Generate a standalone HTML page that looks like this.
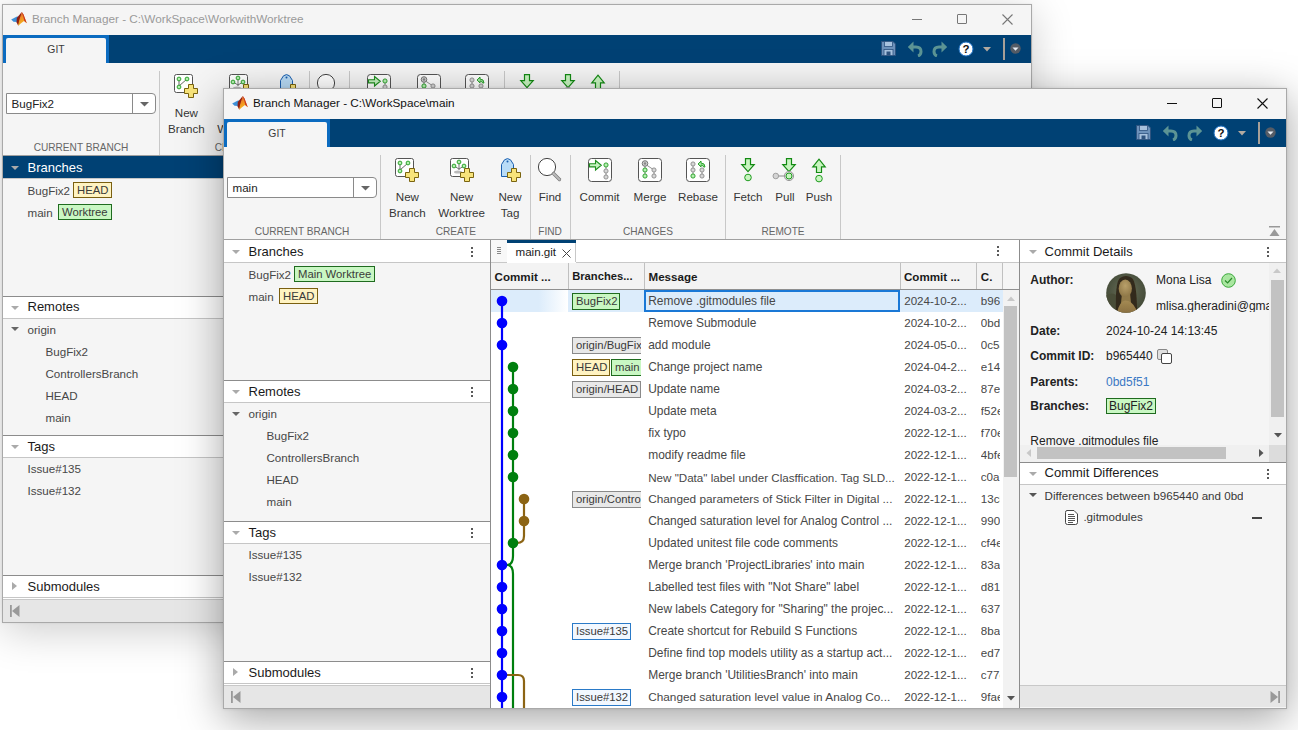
<!DOCTYPE html><html><head><meta charset="utf-8"><style>
html,body{margin:0;padding:0;width:1298px;height:730px;overflow:hidden;background:#fff;}
body{position:relative;font-family:"Liberation Sans",sans-serif;}
div,svg{position:absolute;white-space:nowrap;}
</style></head><body>
<div style="left:2px;top:4px;width:1030px;height:619px;background:#f5f5f5;border:1px solid #a9a9a9;box-sizing:border-box;box-shadow:0 8px 40px rgba(0,0,0,0.20), 0 0 2px rgba(0,0,0,0.08);"></div>
<svg style="left:7px;top:8px;" width="24" height="22" viewBox="0 0 24 22">
<defs><linearGradient id="mlo" x1="0" y1="0" x2="0.3" y2="1"><stop offset="0" stop-color="#c0392b"/><stop offset="0.45" stop-color="#f08a24"/><stop offset="1" stop-color="#f5b81c"/></linearGradient></defs>
<path d="M4.2 11.5 L8 9.5 L10.5 8.2 L11.8 10.5 L10 14 L6.5 13.8 Z" fill="#3d8fd6"/>
<path d="M9.8 10 L14.8 3.9 L13.5 11 L11.2 17.8 L9.6 14.2 Z" fill="#8e1f12"/>
<path d="M14.8 3.9 L16.5 6.5 L19.8 15.3 L17 13 L14 15.2 L11.2 17.8 L12 13 Z" fill="url(#mlo)"/>
<path d="M14.8 3.9 L16.5 6.5 L19.8 15.3 L17.3 13 L16 7.5 Z" fill="#c9331f"/>
</svg>
<div style="top:13.45px;font-size:11.75px;line-height:11.75px;color:#9a9a9a;left:32px;">Branch Manager - C:\WorkSpace\WorkwithWorktree</div>
<div style="left:912px;top:19px;width:10px;height:1px;background:#777;"></div>
<div style="left:957px;top:14px;width:8px;height:8px;border:1px solid #777;border-radius:1px;"></div>
<svg style="left:1002px;top:14px;" width="11" height="11" viewBox="0 0 11 11"><path d="M0.5 0.5 L10.5 10.5 M10.5 0.5 L0.5 10.5" stroke="#777" stroke-width="1.1"/></svg>
<div style="left:3px;top:35px;width:1028px;height:28px;background:#004174;"></div>
<div style="left:3px;top:35px;width:106px;height:28px;background:#0b6bc0;"></div>
<div style="left:6px;top:38px;width:100px;height:25px;background:#f5f5f5;border-radius:2px 2px 0 0;"></div>
<div style="top:45.20px;font-size:10.4px;line-height:10.4px;color:#3a3a3a;left:-244px;width:600px;text-align:center;">GIT</div>
<svg style="left:881px;top:41px;" width="15" height="15" viewBox="0 0 15 15">
<path d="M0.5 0.5 H12 L14.5 3 V14.5 H0.5 Z" fill="#6d92bb" stroke="#2f5480" stroke-width="1"/>
<rect x="3.5" y="0.5" width="8" height="5" fill="#a8c2de" stroke="#2f5480" stroke-width="0.8"/>
<rect x="3" y="8.5" width="9" height="6" fill="#a8c2de" stroke="#2f5480" stroke-width="0.8"/>
<rect x="5.5" y="10.5" width="4" height="4" fill="#2f5480"/>
</svg>
<svg style="left:907px;top:40px;" width="16" height="17" viewBox="0 0 16 17">
<path d="M0.8 7 L6.5 1.5 V12.5 Z" fill="#5c9494"/>
<path d="M6 7 H9 Q14 7 14 11.5 Q14 15 11 16" stroke="#5c9494" stroke-width="3" fill="none"/>
</svg>
<svg style="left:932px;top:40px;" width="16" height="17" viewBox="0 0 16 17">
<path d="M15.2 7 L9.5 1.5 V12.5 Z" fill="#5c9494"/>
<path d="M10 7 H7 Q2 7 2 11.5 Q2 15 5 16" stroke="#5c9494" stroke-width="3" fill="none"/>
</svg>
<svg style="left:958px;top:41px;" width="16" height="16" viewBox="0 0 16 16">
<circle cx="8" cy="8" r="7" fill="#fff" stroke="#1a6fc4" stroke-width="1"/>
<text x="8" y="12.3" text-anchor="middle" font-family="Liberation Sans" font-weight="700" font-size="11.5" fill="#111">?</text>
</svg>
<svg style="left:983px;top:47px;" width="8" height="5" viewBox="0 0 8 5"><path d="M0 0 L8 0 L4 4.5 Z" fill="#b3aaa0"/></svg>
<div style="left:1003px;top:38px;width:2px;height:22px;background:#a8a098;"></div>
<svg style="left:1010px;top:43px;" width="11" height="11" viewBox="0 0 11 11"><circle cx="5.5" cy="5.5" r="5.2" fill="#555c66"/><path d="M2.5 4.5 L8.5 4.5 L5.5 7.8 Z" fill="#e8eef5"/></svg>
<div style="left:6px;top:93px;width:150px;height:21px;background:#fff;border:1px solid #8a8a8a;border-radius:0 4px 4px 0;box-sizing:border-box;"></div>
<div style="left:132px;top:93px;width:1px;height:21px;background:#8a8a8a;"></div>
<svg style="left:140px;top:102px;" width="9" height="5.5" viewBox="0 0 9 5.5"><path d="M0 0 H9 L4.5 4.5 Z" fill="#666"/></svg>
<div style="top:97.78px;font-size:11.6px;line-height:11.6px;color:#222;left:11.5px;">BugFix2</div>
<div style="left:159px;top:71px;width:1px;height:84px;background:#c8c8c8;"></div>
<div style="left:309px;top:71px;width:1px;height:84px;background:#c8c8c8;"></div>
<div style="left:349px;top:71px;width:1px;height:84px;background:#c8c8c8;"></div>
<div style="left:504px;top:71px;width:1px;height:84px;background:#c8c8c8;"></div>
<div style="left:619px;top:71px;width:1px;height:84px;background:#c8c8c8;"></div>
<div style="top:143.15px;font-size:10.1px;line-height:10.1px;color:#666;left:-219px;width:600px;text-align:center;">CURRENT BRANCH</div>
<div style="top:143.15px;font-size:10.1px;line-height:10.1px;color:#666;left:-65.19999999999999px;width:600px;text-align:center;">CREATE</div>
<div style="top:143.15px;font-size:10.1px;line-height:10.1px;color:#666;left:29px;width:600px;text-align:center;">FIND</div>
<div style="top:143.15px;font-size:10.1px;line-height:10.1px;color:#666;left:127px;width:600px;text-align:center;">CHANGES</div>
<div style="top:143.15px;font-size:10.1px;line-height:10.1px;color:#666;left:262px;width:600px;text-align:center;">REMOTE</div>
<svg style="left:174.4px;top:74px;" width="20" height="20" viewBox="0 0 20 20">
<rect x="0.5" y="0.5" width="18" height="18" rx="2" fill="#fff" stroke="#555" stroke-width="1"/>
<path d="M5 5 L5 13 M5 12 L13 5" stroke="#555" stroke-width="0.9"/>
<circle cx="5" cy="5" r="1.9" fill="#b5efb0" stroke="#1f9b1f" stroke-width="0.9"/>
<circle cx="13" cy="5" r="1.9" fill="#b5efb0" stroke="#1f9b1f" stroke-width="0.9"/>
<circle cx="5" cy="13" r="1.9" fill="#b5efb0" stroke="#1f9b1f" stroke-width="0.9"/>
</svg>
<svg style="left:184.4px;top:84px;" width="14" height="14" viewBox="0 0 14 14"><path d="M4.5 0.5 H9.5 V4.5 H13.5 V9.5 H9.5 V13.5 H4.5 V9.5 H0.5 V4.5 H4.5 Z" fill="#f7e37a" stroke="#7a6410" stroke-width="1"/></svg>
<div style="top:106.68px;font-size:11.6px;line-height:11.6px;color:#363636;left:-113.6px;width:600px;text-align:center;">New</div>
<div style="top:122.68px;font-size:11.6px;line-height:11.6px;color:#363636;left:-113.6px;width:600px;text-align:center;">Branch</div>
<svg style="left:228.6px;top:74px;" width="20" height="20" viewBox="0 0 20 20">
<rect x="0.5" y="0.5" width="18" height="18" rx="2" fill="#fff" stroke="#555" stroke-width="1"/>
<path d="M9 4 L9 12 M4 8 L9 11 L14 8" stroke="#666" stroke-width="0.9" fill="none"/>
<ellipse cx="8" cy="14" rx="4" ry="1.6" fill="#bbb"/>
<circle cx="9" cy="4" r="1.9" fill="#b5efb0" stroke="#1f9b1f" stroke-width="0.9"/>
<circle cx="4" cy="8" r="1.9" fill="#b5efb0" stroke="#1f9b1f" stroke-width="0.9"/>
<circle cx="14" cy="8" r="1.9" fill="#b5efb0" stroke="#1f9b1f" stroke-width="0.9"/>
</svg>
<svg style="left:238.6px;top:84px;" width="14" height="14" viewBox="0 0 14 14"><path d="M4.5 0.5 H9.5 V4.5 H13.5 V9.5 H9.5 V13.5 H4.5 V9.5 H0.5 V4.5 H4.5 Z" fill="#f7e37a" stroke="#7a6410" stroke-width="1"/></svg>
<div style="top:106.68px;font-size:11.6px;line-height:11.6px;color:#363636;left:-59.400000000000006px;width:600px;text-align:center;">New</div>
<div style="top:122.68px;font-size:11.6px;line-height:11.6px;color:#363636;left:-59.400000000000006px;width:600px;text-align:center;">Worktree</div>
<svg style="left:280px;top:74px;" width="14" height="19" viewBox="0 0 14 19">
<path d="M0.5 18.5 V6.5 L3.5 1.8 Q6.5 -0.6 9.5 1.8 L12.5 6.5 V18.5 Z" fill="#b9dcf7" stroke="#1a5fb0" stroke-width="1"/>
<circle cx="6.5" cy="3.5" r="1" fill="#1a5fb0"/>
</svg>
<svg style="left:286px;top:84px;" width="14" height="14" viewBox="0 0 14 14"><path d="M4.5 0.5 H9.5 V4.5 H13.5 V9.5 H9.5 V13.5 H4.5 V9.5 H0.5 V4.5 H4.5 Z" fill="#f7e37a" stroke="#7a6410" stroke-width="1"/></svg>
<div style="top:106.68px;font-size:11.6px;line-height:11.6px;color:#363636;left:-11px;width:600px;text-align:center;">New</div>
<div style="top:122.68px;font-size:11.6px;line-height:11.6px;color:#363636;left:-11px;width:600px;text-align:center;">Tag</div>
<svg style="left:316px;top:73px;" width="26" height="26" viewBox="0 0 26 26">
<circle cx="10" cy="10" r="8.6" fill="#fff" stroke="#444" stroke-width="1"/>
<path d="M16.5 16.5 L22.5 22.5" stroke="#777" stroke-width="3.2" stroke-linecap="round"/>
<path d="M16.5 16.5 L22.5 22.5" stroke="#bbb" stroke-width="2" stroke-linecap="round"/>
</svg>
<div style="top:106.68px;font-size:11.6px;line-height:11.6px;color:#363636;left:29px;width:600px;text-align:center;">Find</div>
<svg style="left:366.5px;top:74px;" width="24" height="24" viewBox="0 0 24 24"><rect x="0.5" y="0.5" width="23" height="23" rx="3" fill="#fff" stroke="#555"/>
<path d="M1.5 5.7 H7.5 V2.5 L13.3 7.3 L7.5 12 V8.9 H1.5 Z" fill="#c4f2bf" stroke="#1f8f1f" stroke-width="1.1"/>
<path d="M18 7 V20" stroke="#888" stroke-width="0.9"/>
<circle cx="18" cy="7" r="2.1" fill="#b5efb0" stroke="#1f9b1f" stroke-width="0.9"/>
<circle cx="18" cy="13" r="2.1" fill="#d6d6d6" stroke="#8a8a8a" stroke-width="0.9"/>
<circle cx="18" cy="19" r="2.1" fill="#d6d6d6" stroke="#8a8a8a" stroke-width="0.9"/>
</svg>
<div style="top:106.68px;font-size:11.6px;line-height:11.6px;color:#363636;left:78.5px;width:600px;text-align:center;">Commit</div>
<svg style="left:417px;top:74px;" width="24" height="24" viewBox="0 0 24 24"><rect x="0.5" y="0.5" width="23" height="23" rx="3" fill="#fff" stroke="#555"/>
<path d="M7 6 V18 M7 6 L16 12 V18" stroke="#888" stroke-width="0.9" fill="none"/>
<circle cx="7" cy="5.5" r="2.8" fill="#cfcfcf" stroke="#777"/>
<circle cx="7" cy="5.5" r="1.2" fill="#888"/>
<circle cx="7" cy="12" r="2.1" fill="#b5efb0" stroke="#1f9b1f" stroke-width="0.9"/>
<circle cx="7" cy="18" r="2.1" fill="#b5efb0" stroke="#1f9b1f" stroke-width="0.9"/>
<circle cx="16" cy="12" r="2.1" fill="#d6d6d6" stroke="#8a8a8a" stroke-width="0.9"/>
<circle cx="16" cy="18" r="2.1" fill="#d6d6d6" stroke="#8a8a8a" stroke-width="0.9"/>
</svg>
<div style="top:106.68px;font-size:11.6px;line-height:11.6px;color:#363636;left:129px;width:600px;text-align:center;">Merge</div>
<svg style="left:465px;top:74px;" width="24" height="24" viewBox="0 0 24 24"><rect x="0.5" y="0.5" width="23" height="23" rx="3" fill="#fff" stroke="#555"/>
<path d="M7 6 V18 M16 12 V18" stroke="#888" stroke-width="0.9" fill="none"/>
<circle cx="7" cy="6" r="2.1" fill="#d6d6d6" stroke="#8a8a8a" stroke-width="0.9"/>
<circle cx="7" cy="12" r="2.1" fill="#d6d6d6" stroke="#8a8a8a" stroke-width="0.9"/>
<circle cx="7" cy="18" r="2.1" fill="#b5efb0" stroke="#1f9b1f" stroke-width="0.9"/>
<circle cx="16" cy="12" r="2.1" fill="#d6d6d6" stroke="#8a8a8a" stroke-width="0.9"/>
<circle cx="16" cy="18" r="2.1" fill="#d6d6d6" stroke="#8a8a8a" stroke-width="0.9"/>
<path d="M12 6 L15 3 V5 Q19 5 19 9 L17.5 9 Q17.5 7 15 7 V9 Z" fill="#9fe49f" stroke="#1f9b1f" stroke-width="0.9"/>
</svg>
<div style="top:106.68px;font-size:11.6px;line-height:11.6px;color:#363636;left:177px;width:600px;text-align:center;">Rebase</div>
<svg style="left:517px;top:74px;" width="20" height="25" viewBox="0 0 20 25"><path d="M7.5 0.6 H12.5 V6.6 H16.2 L10 13.6 L3.8 6.6 H7.5 Z" fill="#c8f5c0" stroke="#138a13" stroke-width="1.2"/><circle cx="10" cy="19.5" r="3.3" fill="#c8f5c0" stroke="#1f9b1f" stroke-width="1"/></svg>
<div style="top:106.68px;font-size:11.6px;line-height:11.6px;color:#363636;left:227px;width:600px;text-align:center;">Fetch</div>
<svg style="left:547.5px;top:74px;" width="30" height="25" viewBox="0 0 30 25"><path d="M17.5 0.6 H22.5 V6.6 H26.2 L20 13.6 L13.8 6.6 H17.5 Z" fill="#c8f5c0" stroke="#138a13" stroke-width="1.2"/>
<path d="M7 18 H16" stroke="#8a8a8a" stroke-width="1"/>
<circle cx="6.8" cy="18" r="2.8" fill="#d4d4d4" stroke="#a0a0a0"/>
<circle cx="20" cy="18" r="4.6" fill="#dcdcdc" stroke="#999"/>
<circle cx="20" cy="18" r="3" fill="#c8f5c0" stroke="#1f9b1f" stroke-width="1"/>
</svg>
<div style="top:106.68px;font-size:11.6px;line-height:11.6px;color:#363636;left:264px;width:600px;text-align:center;">Pull</div>
<svg style="left:588px;top:74px;" width="20" height="25" viewBox="0 0 20 25"><path d="M7.5 14.5 H12.5 V8.8 H16.2 L10 1.2 L3.8 8.8 H7.5 Z" fill="#c8f5c0" stroke="#138a13" stroke-width="1.2"/><circle cx="10" cy="20.6" r="3.3" fill="#c8f5c0" stroke="#1f9b1f" stroke-width="1"/></svg>
<div style="top:106.68px;font-size:11.6px;line-height:11.6px;color:#363636;left:298px;width:600px;text-align:center;">Push</div>
<svg style="left:1014px;top:142px;" width="11" height="11" viewBox="0 0 11 11"><rect x="0" y="0" width="11" height="1.5" fill="#999"/><path d="M0.5 10 L5.5 3 L10.5 10 Z" fill="#999"/></svg>
<div style="left:3px;top:155px;width:1028px;height:1px;background:#a0a0a0;"></div>
<div style="left:3px;top:156px;width:237px;height:22px;background:#004174;"></div>
<div style="left:3px;top:178px;width:237px;height:1px;background:#c6c6c6;"></div>
<svg style="left:11px;top:166px;" width="8" height="5" viewBox="0 0 8 5"><path d="M0 0 H8 L4.0 4 Z" fill="#aaa"/></svg>
<div style="top:160.60px;font-size:13px;line-height:13px;color:#fff;left:27.5px;">Branches</div>
<div style="left:3px;top:295.5px;width:237px;height:1px;background:#8c8c8c;"></div>
<div style="left:3px;top:296.5px;width:237px;height:21px;background:#fff;"></div>
<div style="left:3px;top:317.5px;width:237px;height:1px;background:#c6c6c6;"></div>
<svg style="left:11px;top:305.5px;" width="8" height="5" viewBox="0 0 8 5"><path d="M0 0 H8 L4.0 4 Z" fill="#aaa"/></svg>
<div style="top:300.10px;font-size:13px;line-height:13px;color:#1a1a1a;left:27.5px;">Remotes</div>
<div style="left:3px;top:435px;width:237px;height:1px;background:#8c8c8c;"></div>
<div style="left:3px;top:436px;width:237px;height:21px;background:#fff;"></div>
<div style="left:3px;top:457px;width:237px;height:1px;background:#c6c6c6;"></div>
<svg style="left:11px;top:445px;" width="8" height="5" viewBox="0 0 8 5"><path d="M0 0 H8 L4.0 4 Z" fill="#aaa"/></svg>
<div style="top:439.60px;font-size:13px;line-height:13px;color:#1a1a1a;left:27.5px;">Tags</div>
<div style="left:3px;top:575px;width:237px;height:1px;background:#8c8c8c;"></div>
<div style="left:3px;top:576px;width:237px;height:21px;background:#fff;"></div>
<div style="left:3px;top:597px;width:237px;height:1px;background:#c6c6c6;"></div>
<svg style="left:11.5px;top:582px;" width="6" height="8" viewBox="0 0 6 8"><path d="M0 0 V8 L5 4.0 Z" fill="#aaa"/></svg>
<div style="top:579.60px;font-size:13px;line-height:13px;color:#1a1a1a;left:27.5px;">Submodules</div>
<div style="left:3px;top:598px;width:237px;height:1px;background:#fff;"></div>
<div style="left:3px;top:599px;width:237px;height:1px;background:#c8c8c8;"></div>
<div style="left:3px;top:600px;width:237px;height:22px;background:#e6e6e6;"></div>
<svg style="left:10px;top:605px;" width="10" height="12" viewBox="0 0 10 12"><rect x="0" y="0" width="1.8" height="12" fill="#999"/><path d="M9.5 0 V12 L2 6 Z" fill="#999"/></svg>
<div style="top:184.68px;font-size:11.6px;line-height:11.6px;color:#474747;left:27.5px;">BugFix2</div>
<div style="left:73px;top:181.9px;height:14px;padding:0 3px;border:1px solid #7a5f10;background:#fff3c2;font-size:11.3px;line-height:14px;color:#3a3a3a;white-space:nowrap;">HEAD</div>
<div style="top:206.68px;font-size:11.6px;line-height:11.6px;color:#474747;left:27.5px;">main</div>
<div style="left:58px;top:203.9px;height:14px;padding:0 3px;border:1px solid #1f6b1f;background:#c9f7c3;font-size:11.3px;line-height:14px;color:#3a3a3a;white-space:nowrap;">Worktree</div>
<svg style="left:11px;top:327.0px;" width="8" height="5" viewBox="0 0 8 5"><path d="M0 0 H8 L4.0 4 Z" fill="#666"/></svg>
<div style="top:323.68px;font-size:11.6px;line-height:11.6px;color:#474747;left:27.5px;">origin</div>
<div style="top:345.68px;font-size:11.6px;line-height:11.6px;color:#474747;left:45.5px;">BugFix2</div>
<div style="top:367.68px;font-size:11.6px;line-height:11.6px;color:#474747;left:45.5px;">ControllersBranch</div>
<div style="top:389.68px;font-size:11.6px;line-height:11.6px;color:#474747;left:45.5px;">HEAD</div>
<div style="top:411.68px;font-size:11.6px;line-height:11.6px;color:#474747;left:45.5px;">main</div>
<div style="top:463.18px;font-size:11.6px;line-height:11.6px;color:#474747;left:27.5px;">Issue#135</div>
<div style="top:485.18px;font-size:11.6px;line-height:11.6px;color:#474747;left:27.5px;">Issue#132</div>
<div style="left:223px;top:88px;width:1064px;height:621px;background:#f5f5f5;border:1px solid #a9a9a9;box-sizing:border-box;box-shadow:0 10px 40px rgba(0,0,0,0.36), 0 0 3px rgba(0,0,0,0.10);"></div>
<svg style="left:228px;top:92px;" width="24" height="22" viewBox="0 0 24 22">
<defs><linearGradient id="mlo" x1="0" y1="0" x2="0.3" y2="1"><stop offset="0" stop-color="#c0392b"/><stop offset="0.45" stop-color="#f08a24"/><stop offset="1" stop-color="#f5b81c"/></linearGradient></defs>
<path d="M4.2 11.5 L8 9.5 L10.5 8.2 L11.8 10.5 L10 14 L6.5 13.8 Z" fill="#3d8fd6"/>
<path d="M9.8 10 L14.8 3.9 L13.5 11 L11.2 17.8 L9.6 14.2 Z" fill="#8e1f12"/>
<path d="M14.8 3.9 L16.5 6.5 L19.8 15.3 L17 13 L14 15.2 L11.2 17.8 L12 13 Z" fill="url(#mlo)"/>
<path d="M14.8 3.9 L16.5 6.5 L19.8 15.3 L17.3 13 L16 7.5 Z" fill="#c9331f"/>
</svg>
<div style="top:97.45px;font-size:11.75px;line-height:11.75px;color:#111;left:253px;">Branch Manager - C:\WorkSpace\main</div>
<div style="left:1167px;top:103px;width:10px;height:1px;background:#111;"></div>
<div style="left:1212px;top:98px;width:8px;height:8px;border:1px solid #111;border-radius:1px;"></div>
<svg style="left:1257px;top:98px;" width="11" height="11" viewBox="0 0 11 11"><path d="M0.5 0.5 L10.5 10.5 M10.5 0.5 L0.5 10.5" stroke="#111" stroke-width="1.1"/></svg>
<div style="left:224px;top:119px;width:1062px;height:28px;background:#004174;"></div>
<div style="left:224px;top:119px;width:106px;height:28px;background:#0b6bc0;"></div>
<div style="left:227px;top:122px;width:100px;height:25px;background:#f5f5f5;border-radius:2px 2px 0 0;"></div>
<div style="top:129.20px;font-size:10.4px;line-height:10.4px;color:#3a3a3a;left:-23px;width:600px;text-align:center;">GIT</div>
<svg style="left:1136px;top:125px;" width="15" height="15" viewBox="0 0 15 15">
<path d="M0.5 0.5 H12 L14.5 3 V14.5 H0.5 Z" fill="#6d92bb" stroke="#2f5480" stroke-width="1"/>
<rect x="3.5" y="0.5" width="8" height="5" fill="#a8c2de" stroke="#2f5480" stroke-width="0.8"/>
<rect x="3" y="8.5" width="9" height="6" fill="#a8c2de" stroke="#2f5480" stroke-width="0.8"/>
<rect x="5.5" y="10.5" width="4" height="4" fill="#2f5480"/>
</svg>
<svg style="left:1162px;top:124px;" width="16" height="17" viewBox="0 0 16 17">
<path d="M0.8 7 L6.5 1.5 V12.5 Z" fill="#5c9494"/>
<path d="M6 7 H9 Q14 7 14 11.5 Q14 15 11 16" stroke="#5c9494" stroke-width="3" fill="none"/>
</svg>
<svg style="left:1187px;top:124px;" width="16" height="17" viewBox="0 0 16 17">
<path d="M15.2 7 L9.5 1.5 V12.5 Z" fill="#5c9494"/>
<path d="M10 7 H7 Q2 7 2 11.5 Q2 15 5 16" stroke="#5c9494" stroke-width="3" fill="none"/>
</svg>
<svg style="left:1213px;top:125px;" width="16" height="16" viewBox="0 0 16 16">
<circle cx="8" cy="8" r="7" fill="#fff" stroke="#1a6fc4" stroke-width="1"/>
<text x="8" y="12.3" text-anchor="middle" font-family="Liberation Sans" font-weight="700" font-size="11.5" fill="#111">?</text>
</svg>
<svg style="left:1238px;top:131px;" width="8" height="5" viewBox="0 0 8 5"><path d="M0 0 L8 0 L4 4.5 Z" fill="#b3aaa0"/></svg>
<div style="left:1258px;top:122px;width:2px;height:22px;background:#a8a098;"></div>
<svg style="left:1265px;top:127px;" width="11" height="11" viewBox="0 0 11 11"><circle cx="5.5" cy="5.5" r="5.2" fill="#555c66"/><path d="M2.5 4.5 L8.5 4.5 L5.5 7.8 Z" fill="#e8eef5"/></svg>
<div style="left:227px;top:177px;width:150px;height:21px;background:#fff;border:1px solid #8a8a8a;border-radius:0 4px 4px 0;box-sizing:border-box;"></div>
<div style="left:353px;top:177px;width:1px;height:21px;background:#8a8a8a;"></div>
<svg style="left:361px;top:186px;" width="9" height="5.5" viewBox="0 0 9 5.5"><path d="M0 0 H9 L4.5 4.5 Z" fill="#666"/></svg>
<div style="top:181.78px;font-size:11.6px;line-height:11.6px;color:#222;left:232.5px;">main</div>
<div style="left:380px;top:155px;width:1px;height:84px;background:#c8c8c8;"></div>
<div style="left:530px;top:155px;width:1px;height:84px;background:#c8c8c8;"></div>
<div style="left:570px;top:155px;width:1px;height:84px;background:#c8c8c8;"></div>
<div style="left:725px;top:155px;width:1px;height:84px;background:#c8c8c8;"></div>
<div style="left:840px;top:155px;width:1px;height:84px;background:#c8c8c8;"></div>
<div style="top:227.15px;font-size:10.1px;line-height:10.1px;color:#666;left:2px;width:600px;text-align:center;">CURRENT BRANCH</div>
<div style="top:227.15px;font-size:10.1px;line-height:10.1px;color:#666;left:155.8px;width:600px;text-align:center;">CREATE</div>
<div style="top:227.15px;font-size:10.1px;line-height:10.1px;color:#666;left:250px;width:600px;text-align:center;">FIND</div>
<div style="top:227.15px;font-size:10.1px;line-height:10.1px;color:#666;left:348px;width:600px;text-align:center;">CHANGES</div>
<div style="top:227.15px;font-size:10.1px;line-height:10.1px;color:#666;left:483px;width:600px;text-align:center;">REMOTE</div>
<svg style="left:395.4px;top:158px;" width="20" height="20" viewBox="0 0 20 20">
<rect x="0.5" y="0.5" width="18" height="18" rx="2" fill="#fff" stroke="#555" stroke-width="1"/>
<path d="M5 5 L5 13 M5 12 L13 5" stroke="#555" stroke-width="0.9"/>
<circle cx="5" cy="5" r="1.9" fill="#b5efb0" stroke="#1f9b1f" stroke-width="0.9"/>
<circle cx="13" cy="5" r="1.9" fill="#b5efb0" stroke="#1f9b1f" stroke-width="0.9"/>
<circle cx="5" cy="13" r="1.9" fill="#b5efb0" stroke="#1f9b1f" stroke-width="0.9"/>
</svg>
<svg style="left:405.4px;top:168px;" width="14" height="14" viewBox="0 0 14 14"><path d="M4.5 0.5 H9.5 V4.5 H13.5 V9.5 H9.5 V13.5 H4.5 V9.5 H0.5 V4.5 H4.5 Z" fill="#f7e37a" stroke="#7a6410" stroke-width="1"/></svg>
<div style="top:190.68px;font-size:11.6px;line-height:11.6px;color:#363636;left:107.39999999999998px;width:600px;text-align:center;">New</div>
<div style="top:206.68px;font-size:11.6px;line-height:11.6px;color:#363636;left:107.39999999999998px;width:600px;text-align:center;">Branch</div>
<svg style="left:449.6px;top:158px;" width="20" height="20" viewBox="0 0 20 20">
<rect x="0.5" y="0.5" width="18" height="18" rx="2" fill="#fff" stroke="#555" stroke-width="1"/>
<path d="M9 4 L9 12 M4 8 L9 11 L14 8" stroke="#666" stroke-width="0.9" fill="none"/>
<ellipse cx="8" cy="14" rx="4" ry="1.6" fill="#bbb"/>
<circle cx="9" cy="4" r="1.9" fill="#b5efb0" stroke="#1f9b1f" stroke-width="0.9"/>
<circle cx="4" cy="8" r="1.9" fill="#b5efb0" stroke="#1f9b1f" stroke-width="0.9"/>
<circle cx="14" cy="8" r="1.9" fill="#b5efb0" stroke="#1f9b1f" stroke-width="0.9"/>
</svg>
<svg style="left:459.6px;top:168px;" width="14" height="14" viewBox="0 0 14 14"><path d="M4.5 0.5 H9.5 V4.5 H13.5 V9.5 H9.5 V13.5 H4.5 V9.5 H0.5 V4.5 H4.5 Z" fill="#f7e37a" stroke="#7a6410" stroke-width="1"/></svg>
<div style="top:190.68px;font-size:11.6px;line-height:11.6px;color:#363636;left:161.60000000000002px;width:600px;text-align:center;">New</div>
<div style="top:206.68px;font-size:11.6px;line-height:11.6px;color:#363636;left:161.60000000000002px;width:600px;text-align:center;">Worktree</div>
<svg style="left:501px;top:158px;" width="14" height="19" viewBox="0 0 14 19">
<path d="M0.5 18.5 V6.5 L3.5 1.8 Q6.5 -0.6 9.5 1.8 L12.5 6.5 V18.5 Z" fill="#b9dcf7" stroke="#1a5fb0" stroke-width="1"/>
<circle cx="6.5" cy="3.5" r="1" fill="#1a5fb0"/>
</svg>
<svg style="left:507px;top:168px;" width="14" height="14" viewBox="0 0 14 14"><path d="M4.5 0.5 H9.5 V4.5 H13.5 V9.5 H9.5 V13.5 H4.5 V9.5 H0.5 V4.5 H4.5 Z" fill="#f7e37a" stroke="#7a6410" stroke-width="1"/></svg>
<div style="top:190.68px;font-size:11.6px;line-height:11.6px;color:#363636;left:210px;width:600px;text-align:center;">New</div>
<div style="top:206.68px;font-size:11.6px;line-height:11.6px;color:#363636;left:210px;width:600px;text-align:center;">Tag</div>
<svg style="left:537px;top:157px;" width="26" height="26" viewBox="0 0 26 26">
<circle cx="10" cy="10" r="8.6" fill="#fff" stroke="#444" stroke-width="1"/>
<path d="M16.5 16.5 L22.5 22.5" stroke="#777" stroke-width="3.2" stroke-linecap="round"/>
<path d="M16.5 16.5 L22.5 22.5" stroke="#bbb" stroke-width="2" stroke-linecap="round"/>
</svg>
<div style="top:190.68px;font-size:11.6px;line-height:11.6px;color:#363636;left:250px;width:600px;text-align:center;">Find</div>
<svg style="left:587.5px;top:158px;" width="24" height="24" viewBox="0 0 24 24"><rect x="0.5" y="0.5" width="23" height="23" rx="3" fill="#fff" stroke="#555"/>
<path d="M1.5 5.7 H7.5 V2.5 L13.3 7.3 L7.5 12 V8.9 H1.5 Z" fill="#c4f2bf" stroke="#1f8f1f" stroke-width="1.1"/>
<path d="M18 7 V20" stroke="#888" stroke-width="0.9"/>
<circle cx="18" cy="7" r="2.1" fill="#b5efb0" stroke="#1f9b1f" stroke-width="0.9"/>
<circle cx="18" cy="13" r="2.1" fill="#d6d6d6" stroke="#8a8a8a" stroke-width="0.9"/>
<circle cx="18" cy="19" r="2.1" fill="#d6d6d6" stroke="#8a8a8a" stroke-width="0.9"/>
</svg>
<div style="top:190.68px;font-size:11.6px;line-height:11.6px;color:#363636;left:299.5px;width:600px;text-align:center;">Commit</div>
<svg style="left:638px;top:158px;" width="24" height="24" viewBox="0 0 24 24"><rect x="0.5" y="0.5" width="23" height="23" rx="3" fill="#fff" stroke="#555"/>
<path d="M7 6 V18 M7 6 L16 12 V18" stroke="#888" stroke-width="0.9" fill="none"/>
<circle cx="7" cy="5.5" r="2.8" fill="#cfcfcf" stroke="#777"/>
<circle cx="7" cy="5.5" r="1.2" fill="#888"/>
<circle cx="7" cy="12" r="2.1" fill="#b5efb0" stroke="#1f9b1f" stroke-width="0.9"/>
<circle cx="7" cy="18" r="2.1" fill="#b5efb0" stroke="#1f9b1f" stroke-width="0.9"/>
<circle cx="16" cy="12" r="2.1" fill="#d6d6d6" stroke="#8a8a8a" stroke-width="0.9"/>
<circle cx="16" cy="18" r="2.1" fill="#d6d6d6" stroke="#8a8a8a" stroke-width="0.9"/>
</svg>
<div style="top:190.68px;font-size:11.6px;line-height:11.6px;color:#363636;left:350px;width:600px;text-align:center;">Merge</div>
<svg style="left:686px;top:158px;" width="24" height="24" viewBox="0 0 24 24"><rect x="0.5" y="0.5" width="23" height="23" rx="3" fill="#fff" stroke="#555"/>
<path d="M7 6 V18 M16 12 V18" stroke="#888" stroke-width="0.9" fill="none"/>
<circle cx="7" cy="6" r="2.1" fill="#d6d6d6" stroke="#8a8a8a" stroke-width="0.9"/>
<circle cx="7" cy="12" r="2.1" fill="#d6d6d6" stroke="#8a8a8a" stroke-width="0.9"/>
<circle cx="7" cy="18" r="2.1" fill="#b5efb0" stroke="#1f9b1f" stroke-width="0.9"/>
<circle cx="16" cy="12" r="2.1" fill="#d6d6d6" stroke="#8a8a8a" stroke-width="0.9"/>
<circle cx="16" cy="18" r="2.1" fill="#d6d6d6" stroke="#8a8a8a" stroke-width="0.9"/>
<path d="M12 6 L15 3 V5 Q19 5 19 9 L17.5 9 Q17.5 7 15 7 V9 Z" fill="#9fe49f" stroke="#1f9b1f" stroke-width="0.9"/>
</svg>
<div style="top:190.68px;font-size:11.6px;line-height:11.6px;color:#363636;left:398px;width:600px;text-align:center;">Rebase</div>
<svg style="left:738px;top:158px;" width="20" height="25" viewBox="0 0 20 25"><path d="M7.5 0.6 H12.5 V6.6 H16.2 L10 13.6 L3.8 6.6 H7.5 Z" fill="#c8f5c0" stroke="#138a13" stroke-width="1.2"/><circle cx="10" cy="19.5" r="3.3" fill="#c8f5c0" stroke="#1f9b1f" stroke-width="1"/></svg>
<div style="top:190.68px;font-size:11.6px;line-height:11.6px;color:#363636;left:448px;width:600px;text-align:center;">Fetch</div>
<svg style="left:768.5px;top:158px;" width="30" height="25" viewBox="0 0 30 25"><path d="M17.5 0.6 H22.5 V6.6 H26.2 L20 13.6 L13.8 6.6 H17.5 Z" fill="#c8f5c0" stroke="#138a13" stroke-width="1.2"/>
<path d="M7 18 H16" stroke="#8a8a8a" stroke-width="1"/>
<circle cx="6.8" cy="18" r="2.8" fill="#d4d4d4" stroke="#a0a0a0"/>
<circle cx="20" cy="18" r="4.6" fill="#dcdcdc" stroke="#999"/>
<circle cx="20" cy="18" r="3" fill="#c8f5c0" stroke="#1f9b1f" stroke-width="1"/>
</svg>
<div style="top:190.68px;font-size:11.6px;line-height:11.6px;color:#363636;left:485px;width:600px;text-align:center;">Pull</div>
<svg style="left:809px;top:158px;" width="20" height="25" viewBox="0 0 20 25"><path d="M7.5 14.5 H12.5 V8.8 H16.2 L10 1.2 L3.8 8.8 H7.5 Z" fill="#c8f5c0" stroke="#138a13" stroke-width="1.2"/><circle cx="10" cy="20.6" r="3.3" fill="#c8f5c0" stroke="#1f9b1f" stroke-width="1"/></svg>
<div style="top:190.68px;font-size:11.6px;line-height:11.6px;color:#363636;left:519px;width:600px;text-align:center;">Push</div>
<svg style="left:1269px;top:226px;" width="11" height="11" viewBox="0 0 11 11"><rect x="0" y="0" width="11" height="1.5" fill="#999"/><path d="M0.5 10 L5.5 3 L10.5 10 Z" fill="#999"/></svg>
<div style="left:224px;top:239px;width:1062px;height:1px;background:#a0a0a0;"></div>
<div style="left:224px;top:240px;width:266px;height:22px;background:#fff;"></div>
<div style="left:224px;top:262px;width:266px;height:1px;background:#c6c6c6;"></div>
<svg style="left:232px;top:250px;" width="8" height="5" viewBox="0 0 8 5"><path d="M0 0 H8 L4.0 4 Z" fill="#aaa"/></svg>
<div style="top:244.60px;font-size:13px;line-height:13px;color:#1a1a1a;left:248.5px;">Branches</div>
<svg style="left:470px;top:245.5px;" width="4" height="12" viewBox="0 0 4 12"><rect x="1" y="1" width="2" height="2" fill="#595959"/><rect x="1" y="5" width="2" height="2" fill="#595959"/><rect x="1" y="9" width="2" height="2" fill="#595959"/></svg>
<div style="left:224px;top:380px;width:266px;height:1px;background:#8c8c8c;"></div>
<div style="left:224px;top:381px;width:266px;height:21px;background:#fff;"></div>
<div style="left:224px;top:402px;width:266px;height:1px;background:#c6c6c6;"></div>
<svg style="left:232px;top:390px;" width="8" height="5" viewBox="0 0 8 5"><path d="M0 0 H8 L4.0 4 Z" fill="#aaa"/></svg>
<div style="top:384.60px;font-size:13px;line-height:13px;color:#1a1a1a;left:248.5px;">Remotes</div>
<svg style="left:470px;top:385.5px;" width="4" height="12" viewBox="0 0 4 12"><rect x="1" y="1" width="2" height="2" fill="#595959"/><rect x="1" y="5" width="2" height="2" fill="#595959"/><rect x="1" y="9" width="2" height="2" fill="#595959"/></svg>
<div style="left:224px;top:521px;width:266px;height:1px;background:#8c8c8c;"></div>
<div style="left:224px;top:522px;width:266px;height:21px;background:#fff;"></div>
<div style="left:224px;top:543px;width:266px;height:1px;background:#c6c6c6;"></div>
<svg style="left:232px;top:531px;" width="8" height="5" viewBox="0 0 8 5"><path d="M0 0 H8 L4.0 4 Z" fill="#aaa"/></svg>
<div style="top:525.60px;font-size:13px;line-height:13px;color:#1a1a1a;left:248.5px;">Tags</div>
<svg style="left:470px;top:526.5px;" width="4" height="12" viewBox="0 0 4 12"><rect x="1" y="1" width="2" height="2" fill="#595959"/><rect x="1" y="5" width="2" height="2" fill="#595959"/><rect x="1" y="9" width="2" height="2" fill="#595959"/></svg>
<div style="left:224px;top:661px;width:266px;height:1px;background:#8c8c8c;"></div>
<div style="left:224px;top:662px;width:266px;height:21px;background:#fff;"></div>
<div style="left:224px;top:683px;width:266px;height:1px;background:#c6c6c6;"></div>
<svg style="left:232.5px;top:668px;" width="6" height="8" viewBox="0 0 6 8"><path d="M0 0 V8 L5 4.0 Z" fill="#aaa"/></svg>
<div style="top:665.60px;font-size:13px;line-height:13px;color:#1a1a1a;left:248.5px;">Submodules</div>
<svg style="left:470px;top:666.5px;" width="4" height="12" viewBox="0 0 4 12"><rect x="1" y="1" width="2" height="2" fill="#595959"/><rect x="1" y="5" width="2" height="2" fill="#595959"/><rect x="1" y="9" width="2" height="2" fill="#595959"/></svg>
<div style="left:224px;top:684px;width:266px;height:1px;background:#fff;"></div>
<div style="left:224px;top:685px;width:266px;height:1px;background:#c8c8c8;"></div>
<div style="left:224px;top:686px;width:266px;height:22px;background:#e6e6e6;"></div>
<svg style="left:231px;top:691px;" width="10" height="12" viewBox="0 0 10 12"><rect x="0" y="0" width="1.8" height="12" fill="#999"/><path d="M9.5 0 V12 L2 6 Z" fill="#999"/></svg>
<div style="top:268.78px;font-size:11.6px;line-height:11.6px;color:#474747;left:248.5px;">BugFix2</div>
<div style="left:294px;top:266.0px;height:14px;padding:0 3px;border:1px solid #1f6b1f;background:#c9f7c3;font-size:11.3px;line-height:14px;color:#3a3a3a;white-space:nowrap;">Main Worktree</div>
<div style="top:290.78px;font-size:11.6px;line-height:11.6px;color:#474747;left:248.5px;">main</div>
<div style="left:279px;top:288.0px;height:14px;padding:0 3px;border:1px solid #7a5f10;background:#fff3c2;font-size:11.3px;line-height:14px;color:#3a3a3a;white-space:nowrap;">HEAD</div>
<svg style="left:232px;top:411.5px;" width="8" height="5" viewBox="0 0 8 5"><path d="M0 0 H8 L4.0 4 Z" fill="#666"/></svg>
<div style="top:408.18px;font-size:11.6px;line-height:11.6px;color:#474747;left:248.5px;">origin</div>
<div style="top:430.18px;font-size:11.6px;line-height:11.6px;color:#474747;left:266.5px;">BugFix2</div>
<div style="top:452.18px;font-size:11.6px;line-height:11.6px;color:#474747;left:266.5px;">ControllersBranch</div>
<div style="top:474.18px;font-size:11.6px;line-height:11.6px;color:#474747;left:266.5px;">HEAD</div>
<div style="top:496.18px;font-size:11.6px;line-height:11.6px;color:#474747;left:266.5px;">main</div>
<div style="top:549.18px;font-size:11.6px;line-height:11.6px;color:#474747;left:248.5px;">Issue#135</div>
<div style="top:571.18px;font-size:11.6px;line-height:11.6px;color:#474747;left:248.5px;">Issue#132</div>
<div style="left:491px;top:240px;width:528px;height:22px;background:#fff;"></div>
<div style="left:491px;top:240px;width:16px;height:22px;background:#f8f8f8;"></div>
<div style="left:507px;top:240px;width:1px;height:22px;background:#c8c8c8;"></div>
<div style="left:491px;top:262px;width:528px;height:1px;background:#c8c8c8;"></div>
<svg style="left:497px;top:247px;" width="4" height="7" viewBox="0 0 4 7"><rect x="0" y="0" width="4" height="1" fill="#888"/><rect x="0" y="2" width="4" height="1" fill="#888"/><rect x="0" y="4" width="4" height="1" fill="#888"/><rect x="0" y="6" width="4" height="1" fill="#888"/></svg>
<div style="left:507px;top:240px;width:69px;height:23px;background:#fff;"></div>
<div style="left:575px;top:240px;width:1px;height:22px;background:#c8c8c8;"></div>
<div style="left:507px;top:240px;width:69px;height:3px;background:#004174;"></div>
<div style="top:246.48px;font-size:11.6px;line-height:11.6px;color:#1a1a1a;left:515.5px;">main.git</div>
<svg style="left:562px;top:249px;" width="9" height="9" viewBox="0 0 9 9"><path d="M0.5 0.5 L8.5 8.5 M8.5 0.5 L0.5 8.5" stroke="#444" stroke-width="1"/></svg>
<svg style="left:996px;top:245px;" width="4" height="12" viewBox="0 0 4 12"><rect x="1" y="1" width="2" height="2" fill="#595959"/><rect x="1" y="5" width="2" height="2" fill="#595959"/><rect x="1" y="9" width="2" height="2" fill="#595959"/></svg>
<div style="left:491px;top:263px;width:512px;height:445px;background:#fff;"></div>
<div style="left:491px;top:263px;width:512px;height:26px;background:#f3f3f3;"></div>
<div style="left:491px;top:289px;width:528px;height:1px;background:#8f8f8f;"></div>
<div style="left:568px;top:263px;width:1px;height:26px;background:#c0c0c0;"></div>
<div style="left:644px;top:263px;width:1px;height:26px;background:#c0c0c0;"></div>
<div style="left:900px;top:263px;width:1px;height:26px;background:#c0c0c0;"></div>
<div style="left:976px;top:263px;width:1px;height:26px;background:#c0c0c0;"></div>
<div style="left:1002px;top:263px;width:1px;height:26px;background:#c0c0c0;"></div>
<div style="top:270.68px;font-size:11.6px;line-height:11.6px;color:#1a1a1a;font-weight:700;left:494.6px;">Commit ...</div>
<div style="top:271.02px;font-size:11.2px;line-height:11.2px;color:#1a1a1a;font-weight:700;left:572.2px;">Branches...</div>
<div style="top:270.68px;font-size:11.6px;line-height:11.6px;color:#1a1a1a;font-weight:700;left:648.5px;">Message</div>
<div style="top:270.68px;font-size:11.6px;line-height:11.6px;color:#1a1a1a;font-weight:700;left:904px;">Commit ...</div>
<div style="top:270.68px;font-size:11.6px;line-height:11.6px;color:#1a1a1a;font-weight:700;left:980.8px;">C.</div>
<div style="left:491px;top:290px;width:77px;height:22px;background:linear-gradient(90deg,#dcecfb 0%,#dcecfb 62%,#ffffff 100%);"></div>
<div style="left:568px;top:290px;width:435px;height:22px;background:#dcecfb;"></div>
<div style="left:644px;top:290px;width:256px;height:22px;border:2px solid #1a78d6;box-sizing:border-box;"></div>
<div style="top:295.68px;font-size:11.95px;line-height:11.95px;color:#474747;left:648.2px;width:249px;overflow:hidden;">Remove .gitmodules file</div>
<div style="top:294.98px;font-size:11.6px;line-height:11.6px;color:#474747;left:904.2px;">2024-10-2...</div>
<div style="top:294.98px;font-size:11.6px;line-height:11.6px;color:#474747;left:980.8px;width:19.2px;overflow:hidden;">b965440</div>
<div style="top:317.68px;font-size:11.95px;line-height:11.95px;color:#474747;left:648.2px;width:249px;overflow:hidden;">Remove Submodule</div>
<div style="top:316.98px;font-size:11.6px;line-height:11.6px;color:#474747;left:904.2px;">2024-10-2...</div>
<div style="top:316.98px;font-size:11.6px;line-height:11.6px;color:#474747;left:980.8px;width:19.2px;overflow:hidden;">0bd5f51</div>
<div style="top:339.68px;font-size:11.95px;line-height:11.95px;color:#474747;left:648.2px;width:249px;overflow:hidden;">add module</div>
<div style="top:338.98px;font-size:11.6px;line-height:11.6px;color:#474747;left:904.2px;">2024-05-0...</div>
<div style="top:338.98px;font-size:11.6px;line-height:11.6px;color:#474747;left:980.8px;width:19.2px;overflow:hidden;">0c5a1b2</div>
<div style="top:361.68px;font-size:11.95px;line-height:11.95px;color:#474747;left:648.2px;width:249px;overflow:hidden;">Change project name</div>
<div style="top:360.98px;font-size:11.6px;line-height:11.6px;color:#474747;left:904.2px;">2024-04-2...</div>
<div style="top:360.98px;font-size:11.6px;line-height:11.6px;color:#474747;left:980.8px;width:19.2px;overflow:hidden;">e14a3c9</div>
<div style="top:383.68px;font-size:11.95px;line-height:11.95px;color:#474747;left:648.2px;width:249px;overflow:hidden;">Update name</div>
<div style="top:382.98px;font-size:11.6px;line-height:11.6px;color:#474747;left:904.2px;">2024-03-2...</div>
<div style="top:382.98px;font-size:11.6px;line-height:11.6px;color:#474747;left:980.8px;width:19.2px;overflow:hidden;">87e1d2a</div>
<div style="top:405.68px;font-size:11.95px;line-height:11.95px;color:#474747;left:648.2px;width:249px;overflow:hidden;">Update meta</div>
<div style="top:404.98px;font-size:11.6px;line-height:11.6px;color:#474747;left:904.2px;">2024-03-2...</div>
<div style="top:404.98px;font-size:11.6px;line-height:11.6px;color:#474747;left:980.8px;width:19.2px;overflow:hidden;">f52e9a1</div>
<div style="top:427.68px;font-size:11.95px;line-height:11.95px;color:#474747;left:648.2px;width:249px;overflow:hidden;">fix typo</div>
<div style="top:426.98px;font-size:11.6px;line-height:11.6px;color:#474747;left:904.2px;">2022-12-1...</div>
<div style="top:426.98px;font-size:11.6px;line-height:11.6px;color:#474747;left:980.8px;width:19.2px;overflow:hidden;">f70e3b2</div>
<div style="top:449.68px;font-size:11.95px;line-height:11.95px;color:#474747;left:648.2px;width:249px;overflow:hidden;">modify readme file</div>
<div style="top:448.98px;font-size:11.6px;line-height:11.6px;color:#474747;left:904.2px;">2022-12-1...</div>
<div style="top:448.98px;font-size:11.6px;line-height:11.6px;color:#474747;left:980.8px;width:19.2px;overflow:hidden;">4bfe1a0</div>
<div style="top:471.96px;font-size:11.62px;line-height:11.62px;color:#474747;left:648.2px;width:249px;overflow:hidden;">New &quot;Data&quot; label under Clasffication. Tag SLD...</div>
<div style="top:470.98px;font-size:11.6px;line-height:11.6px;color:#474747;left:904.2px;">2022-12-1...</div>
<div style="top:470.98px;font-size:11.6px;line-height:11.6px;color:#474747;left:980.8px;width:19.2px;overflow:hidden;">c0a7b31</div>
<div style="top:493.79px;font-size:11.82px;line-height:11.82px;color:#474747;left:648.2px;width:249px;overflow:hidden;">Changed parameters of Stick Filter in Digital ...</div>
<div style="top:492.98px;font-size:11.6px;line-height:11.6px;color:#474747;left:904.2px;">2022-12-1...</div>
<div style="top:492.98px;font-size:11.6px;line-height:11.6px;color:#474747;left:980.8px;width:19.2px;overflow:hidden;">13c8e20</div>
<div style="top:515.68px;font-size:11.95px;line-height:11.95px;color:#474747;left:648.2px;width:249px;overflow:hidden;">Changed saturation level for Analog Control ...</div>
<div style="top:514.98px;font-size:11.6px;line-height:11.6px;color:#474747;left:904.2px;">2022-12-1...</div>
<div style="top:514.98px;font-size:11.6px;line-height:11.6px;color:#474747;left:980.8px;width:19.2px;overflow:hidden;">990a1b7</div>
<div style="top:537.68px;font-size:11.95px;line-height:11.95px;color:#474747;left:648.2px;width:249px;overflow:hidden;">Updated unitest file code comments</div>
<div style="top:536.98px;font-size:11.6px;line-height:11.6px;color:#474747;left:904.2px;">2022-12-1...</div>
<div style="top:536.98px;font-size:11.6px;line-height:11.6px;color:#474747;left:980.8px;width:19.2px;overflow:hidden;">cf4e2a9</div>
<div style="top:559.68px;font-size:11.95px;line-height:11.95px;color:#474747;left:648.2px;width:249px;overflow:hidden;">Merge branch &#x27;ProjectLibraries&#x27; into main</div>
<div style="top:558.98px;font-size:11.6px;line-height:11.6px;color:#474747;left:904.2px;">2022-12-1...</div>
<div style="top:558.98px;font-size:11.6px;line-height:11.6px;color:#474747;left:980.8px;width:19.2px;overflow:hidden;">83a0c51</div>
<div style="top:581.68px;font-size:11.95px;line-height:11.95px;color:#474747;left:648.2px;width:249px;overflow:hidden;">Labelled test files with &quot;Not Share&quot; label</div>
<div style="top:580.98px;font-size:11.6px;line-height:11.6px;color:#474747;left:904.2px;">2022-12-1...</div>
<div style="top:580.98px;font-size:11.6px;line-height:11.6px;color:#474747;left:980.8px;width:19.2px;overflow:hidden;">d81a2e4</div>
<div style="top:603.73px;font-size:11.9px;line-height:11.9px;color:#474747;left:648.2px;width:249px;overflow:hidden;">New labels Category for &quot;Sharing&quot; the projec...</div>
<div style="top:602.98px;font-size:11.6px;line-height:11.6px;color:#474747;left:904.2px;">2022-12-1...</div>
<div style="top:602.98px;font-size:11.6px;line-height:11.6px;color:#474747;left:980.8px;width:19.2px;overflow:hidden;">637b8c0</div>
<div style="top:625.68px;font-size:11.95px;line-height:11.95px;color:#474747;left:648.2px;width:249px;overflow:hidden;">Create shortcut for Rebuild S Functions</div>
<div style="top:624.98px;font-size:11.6px;line-height:11.6px;color:#474747;left:904.2px;">2022-12-1...</div>
<div style="top:624.98px;font-size:11.6px;line-height:11.6px;color:#474747;left:980.8px;width:19.2px;overflow:hidden;">8ba3d1f</div>
<div style="top:647.68px;font-size:11.95px;line-height:11.95px;color:#474747;left:648.2px;width:249px;overflow:hidden;">Define find top models utility as a startup act...</div>
<div style="top:646.98px;font-size:11.6px;line-height:11.6px;color:#474747;left:904.2px;">2022-12-1...</div>
<div style="top:646.98px;font-size:11.6px;line-height:11.6px;color:#474747;left:980.8px;width:19.2px;overflow:hidden;">ed70a6c</div>
<div style="top:669.68px;font-size:11.95px;line-height:11.95px;color:#474747;left:648.2px;width:249px;overflow:hidden;">Merge branch &#x27;UtilitiesBranch&#x27; into main</div>
<div style="top:668.98px;font-size:11.6px;line-height:11.6px;color:#474747;left:904.2px;">2022-12-1...</div>
<div style="top:668.98px;font-size:11.6px;line-height:11.6px;color:#474747;left:980.8px;width:19.2px;overflow:hidden;">c77e2b1</div>
<div style="top:691.80px;font-size:11.81px;line-height:11.81px;color:#474747;left:648.2px;width:249px;overflow:hidden;">Changed saturation level value in Analog Co...</div>
<div style="top:690.98px;font-size:11.6px;line-height:11.6px;color:#474747;left:904.2px;">2022-12-1...</div>
<div style="top:690.98px;font-size:11.6px;line-height:11.6px;color:#474747;left:980.8px;width:19.2px;overflow:hidden;">9fae031</div>
<div style="left:569px;top:290px;width:72px;height:418px;overflow:hidden;">
<div style="left:3px;top:3px;height:15px;padding:0 2px 0 3px;border:1px solid #1f6b1f;background:#c9f7c3;font-size:11.3px;line-height:15px;color:#3a3a3a;">BugFix2</div>
<div style="left:3px;top:47px;height:15px;padding:0 2px 0 3px;border:1px solid #8a8a8a;background:#e8e8e8;font-size:11.3px;line-height:15px;color:#3a3a3a;">origin/BugFix2</div>
<div style="left:3px;top:69px;height:15px;padding:0 2px 0 3px;border:1px solid #7a5f10;background:#fff3c2;font-size:11.3px;line-height:15px;color:#3a3a3a;">HEAD</div>
<div style="left:42px;top:69px;height:15px;padding:0 2px 0 3px;border:1px solid #1f6b1f;background:#c9f7c3;font-size:11.3px;line-height:15px;color:#3a3a3a;">main</div>
<div style="left:3px;top:91px;height:15px;padding:0 2px 0 3px;border:1px solid #8a8a8a;background:#e8e8e8;font-size:11.3px;line-height:15px;color:#3a3a3a;">origin/HEAD</div>
<div style="left:3px;top:201px;height:15px;padding:0 2px 0 3px;border:1px solid #8a8a8a;background:#e8e8e8;font-size:11.3px;line-height:15px;color:#3a3a3a;">origin/ControllersBranch</div>
<div style="left:3px;top:333px;height:15px;padding:0 2px 0 3px;border:1px solid #2a7ac8;background:#f2f8ff;font-size:11.3px;line-height:15px;color:#3a3a3a;">Issue#135</div>
<div style="left:3px;top:399px;height:15px;padding:0 2px 0 3px;border:1px solid #2a7ac8;background:#f2f8ff;font-size:11.3px;line-height:15px;color:#3a3a3a;">Issue#132</div>
</div>
<div style="left:491px;top:290px;width:77px;height:418px;overflow:hidden;"><svg style="left:-491px;top:-290px" width="1298" height="730"><path d="M502 301 V730" stroke="#0000ff" stroke-width="2.2" fill="none"/><path d="M513 367 V556 Q513 565 507 565 Q513 565 513 574 V730" stroke="#007f0e" stroke-width="2.2" fill="none"/><path d="M524 499 V536 Q524 543 517 543" stroke="#8c6414" stroke-width="2.2" fill="none"/><path d="M502 675 H518 Q524 675 524 681 V730" stroke="#8c6414" stroke-width="2.2" fill="none"/><circle cx="502" cy="301" r="5.3" fill="#0000ff"/><circle cx="502" cy="323" r="5.3" fill="#0000ff"/><circle cx="502" cy="345" r="5.3" fill="#0000ff"/><circle cx="513" cy="367" r="5.3" fill="#007f0e"/><circle cx="513" cy="389" r="5.3" fill="#007f0e"/><circle cx="513" cy="411" r="5.3" fill="#007f0e"/><circle cx="513" cy="433" r="5.3" fill="#007f0e"/><circle cx="513" cy="455" r="5.3" fill="#007f0e"/><circle cx="513" cy="477" r="5.3" fill="#007f0e"/><circle cx="513" cy="543" r="5.3" fill="#007f0e"/><circle cx="524" cy="499" r="5.3" fill="#8c6414"/><circle cx="524" cy="521" r="5.3" fill="#8c6414"/><circle cx="502" cy="565" r="5.3" fill="#0000ff"/><circle cx="502" cy="587" r="5.3" fill="#0000ff"/><circle cx="502" cy="609" r="5.3" fill="#0000ff"/><circle cx="502" cy="631" r="5.3" fill="#0000ff"/><circle cx="502" cy="653" r="5.3" fill="#0000ff"/><circle cx="502" cy="675" r="5.3" fill="#0000ff"/><circle cx="502" cy="697" r="5.3" fill="#0000ff"/></svg></div>
<div style="left:1003px;top:290px;width:16px;height:418px;background:#f2f2f2;"></div>
<div style="left:1004px;top:306px;width:13px;height:171px;background:#c2c2c2;"></div>
<svg style="left:1006.5px;top:695.5px;" width="8" height="5.5" viewBox="0 0 8 5.5"><path d="M0 0 H8 L4.0 4.5 Z" fill="#555"/></svg>
<svg style="left:1006.5px;top:296px;" width="9" height="6" viewBox="0 0 9 6"><path d="M0 5 H8 L4 0.5 Z" fill="#c8c8c8"/></svg>
<div style="left:490px;top:240px;width:1px;height:468px;background:#8c8c8c;"></div>
<div style="left:1019px;top:240px;width:1px;height:468px;background:#8c8c8c;"></div>
<div style="left:1020px;top:240px;width:266px;height:22px;background:#fff;"></div>
<div style="left:1020px;top:262px;width:266px;height:1px;background:#c6c6c6;"></div>
<svg style="left:1028.5px;top:250px;" width="8" height="5" viewBox="0 0 8 5"><path d="M0 0 H8 L4.0 4 Z" fill="#aaa"/></svg>
<div style="top:244.60px;font-size:13px;line-height:13px;color:#1a1a1a;left:1044.6px;">Commit Details</div>
<svg style="left:1266px;top:245.5px;" width="4" height="12" viewBox="0 0 4 12"><rect x="1" y="1" width="2" height="2" fill="#595959"/><rect x="1" y="5" width="2" height="2" fill="#595959"/><rect x="1" y="9" width="2" height="2" fill="#595959"/></svg>
<div style="top:274.24px;font-size:12px;line-height:12px;color:#222;font-weight:700;left:1030.3px;">Author:</div>
<div style="top:325.04px;font-size:12px;line-height:12px;color:#222;font-weight:700;left:1030.3px;">Date:</div>
<div style="top:349.84px;font-size:12px;line-height:12px;color:#222;font-weight:700;left:1030.3px;">Commit ID:</div>
<div style="top:375.64px;font-size:12px;line-height:12px;color:#222;font-weight:700;left:1030.3px;">Parents:</div>
<div style="top:400.04px;font-size:12px;line-height:12px;color:#222;font-weight:700;left:1030.3px;">Branches:</div>
<div style="top:274.24px;font-size:12px;line-height:12px;color:#222;left:1156px;">Mona Lisa</div>
<div style="top:300.14px;font-size:12px;line-height:12px;color:#222;left:1156px;width:113px;overflow:hidden;">mlisa.gheradini@gmail.com</div>
<div style="top:325.04px;font-size:12px;line-height:12px;color:#222;left:1106px;">2024-10-24 14:13:45</div>
<div style="top:349.84px;font-size:12px;line-height:12px;color:#222;left:1106px;">b965440</div>
<div style="top:375.64px;font-size:12px;line-height:12px;color:#3b78c4;left:1106px;">0bd5f51</div>
<div style="left:1106px;top:398px;height:14px;padding:0 2px;border:1px solid #1f6b1f;background:#c9f7c3;font-size:12px;line-height:14px;color:#222;">BugFix2</div>
<svg style="left:1106px;top:273px;" width="40" height="40" viewBox="0 0 40 40">
<defs><clipPath id="av"><circle cx="20" cy="20" r="19.8"/></clipPath>
<filter id="avb" x="-10%" y="-10%" width="120%" height="120%"><feGaussianBlur stdDeviation="0.7"/></filter>
<radialGradient id="bgav" cx="0.5" cy="0.45" r="0.6"><stop offset="0" stop-color="#6a705a"/><stop offset="1" stop-color="#3f4634"/></radialGradient>
<radialGradient id="face" cx="0.5" cy="0.35" r="0.6"><stop offset="0" stop-color="#b9a06a"/><stop offset="1" stop-color="#8f7848"/></radialGradient>
<linearGradient id="chest" x1="0" y1="0" x2="0" y2="1"><stop offset="0" stop-color="#a48a54"/><stop offset="1" stop-color="#8a7040"/></linearGradient></defs>
<g clip-path="url(#av)">
<rect width="40" height="40" fill="url(#bgav)"/>
<g filter="url(#avb)">
<path d="M0 22 Q8 18 12 24 L12 40 L0 40 Z" fill="#4a4e38"/>
<path d="M10 40 Q9 9 14 5 Q20 1 26 5 Q31 10 31 40 Z" fill="#33291a"/>
<path d="M16 20 L24 20 L25 30 L15 30 Z" fill="#917a48"/>
<ellipse cx="19.3" cy="15.5" rx="6.6" ry="9" fill="url(#face)"/>
<path d="M11 40 Q13 29 19 27.5 Q26 27.5 30 36 L31 40 Z" fill="url(#chest)"/>
<path d="M0 34 Q6 32 11 40 L0 40 Z" fill="#2e2a1c"/>
</g>
</g></svg>
<svg style="left:1221px;top:273px;" width="15" height="15" viewBox="0 0 15 15"><circle cx="7.5" cy="7.5" r="6.8" fill="#a9e6a0" stroke="#3aa83a" stroke-width="1"/><path d="M4 7.5 L6.6 10 L11 5" stroke="#2a8a2a" stroke-width="1.2" fill="none"/></svg>
<svg style="left:1157px;top:348.5px;" width="16" height="16" viewBox="0 0 16 16"><rect x="0.5" y="0.5" width="10" height="10" rx="1.5" fill="#e0e0e0" stroke="#888"/><rect x="4.5" y="4.5" width="10" height="10" rx="1.5" fill="#fff" stroke="#444"/></svg>
<div style="left:1028px;top:430px;width:240px;height:15.5px;overflow:hidden;">
<div style="top:5.24px;font-size:12px;line-height:12px;color:#222;left:2.3px;">Remove .gitmodules file</div>
</div>
<div style="left:1269px;top:263px;width:17px;height:182px;background:#f0f0f0;"></div>
<div style="left:1271px;top:280px;width:13px;height:137px;background:#c2c2c2;"></div>
<svg style="left:1273px;top:268px;" width="9" height="6" viewBox="0 0 9 6"><path d="M0 5 H8 L4 0.5 Z" fill="#c8c8c8"/></svg>
<svg style="left:1273.5px;top:433px;" width="8" height="5.5" viewBox="0 0 8 5.5"><path d="M0 0 H8 L4.0 4.5 Z" fill="#555"/></svg>
<div style="left:1020px;top:445px;width:249px;height:17px;background:#f0f0f0;"></div>
<div style="left:1037px;top:447px;width:189px;height:12px;background:#c2c2c2;"></div>
<svg style="left:1026px;top:449px;" width="6" height="9" viewBox="0 0 6 9"><path d="M5 0 V8 L0.5 4 Z" fill="#c8c8c8"/></svg>
<svg style="left:1258.5px;top:449px;" width="5.5" height="8" viewBox="0 0 5.5 8"><path d="M0 0 V8 L4.5 4.0 Z" fill="#555"/></svg>
<div style="left:1269px;top:445px;width:17px;height:17px;background:#dcdcdc;"></div>
<div style="left:1020px;top:462px;width:266px;height:1px;background:#8c8c8c;"></div>
<div style="left:1020px;top:463px;width:266px;height:21px;background:#fff;"></div>
<div style="left:1020px;top:484px;width:266px;height:1px;background:#c6c6c6;"></div>
<svg style="left:1028.5px;top:472px;" width="8" height="5" viewBox="0 0 8 5"><path d="M0 0 H8 L4.0 4 Z" fill="#aaa"/></svg>
<div style="top:466.30px;font-size:13px;line-height:13px;color:#1a1a1a;left:1044.6px;">Commit Differences</div>
<svg style="left:1266px;top:467.5px;" width="4" height="12" viewBox="0 0 4 12"><rect x="1" y="1" width="2" height="2" fill="#595959"/><rect x="1" y="5" width="2" height="2" fill="#595959"/><rect x="1" y="9" width="2" height="2" fill="#595959"/></svg>
<svg style="left:1028.5px;top:493px;" width="8" height="5" viewBox="0 0 8 5"><path d="M0 0 H8 L4.0 4 Z" fill="#555"/></svg>
<div style="left:1044px;top:485px;width:199px;height:22px;overflow:hidden;">
<div style="top:4.88px;font-size:11.6px;line-height:11.6px;color:#383838;left:0.6px;">Differences between b965440 and 0bd5f51</div>
</div>
<svg style="left:1065px;top:510px;" width="14" height="15" viewBox="0 0 14 15"><path d="M2 0.5 H9 L12.5 4 V12.5 Q12.5 14.5 10.5 14.5 H2.5 Q0.5 14.5 0.5 12.5 V2.5 Q0.5 0.5 2 0.5 Z" fill="#fff" stroke="#444"/><rect x="3" y="4" width="6" height="1" fill="#555"/><rect x="3" y="6" width="7" height="1" fill="#555"/><rect x="3" y="8" width="7" height="1" fill="#555"/><rect x="3" y="10" width="7" height="1" fill="#555"/><rect x="3" y="12" width="5" height="1" fill="#555"/></svg>
<div style="top:511.48px;font-size:11.6px;line-height:11.6px;color:#383838;left:1083.4px;">.gitmodules</div>
<div style="left:1252px;top:517px;width:10px;height:2px;background:#444;"></div>
<div style="left:1020px;top:685px;width:266px;height:1px;background:#c8c8c8;"></div>
<div style="left:1020px;top:686px;width:266px;height:21px;background:#e6e6e6;"></div>
<svg style="left:1270px;top:691px;" width="10" height="12" viewBox="0 0 10 12"><rect x="8.2" y="0" width="1.8" height="12" fill="#999"/><path d="M0.5 0 V12 L8 6 Z" fill="#999"/></svg>
</body></html>
